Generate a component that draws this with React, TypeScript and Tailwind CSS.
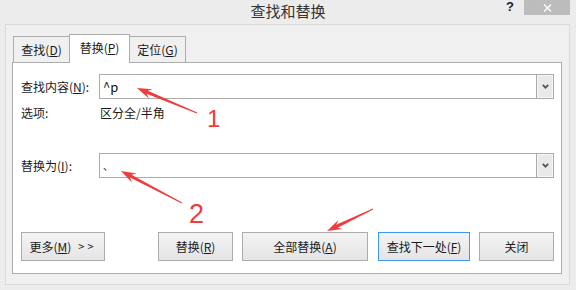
import React from 'react';

type Pt = [number, number];

// tapered red arrow from tail (s) to tip (t)
function arrowPoints(t: Pt, s: Pt) {
  const dx = t[0] - s[0];
  const dy = t[1] - s[1];
  const len = Math.hypot(dx, dy);
  const ux = dx / len;
  const uy = dy / len;
  const nx = -uy;
  const ny = ux;
  const head = 15;
  const hw = 5;
  const wing: Pt = [t[0] - ux * head, t[1] - uy * head];
  const neck: Pt = [t[0] - ux * (head - 4), t[1] - uy * (head - 4)];
  const pts: Pt[] = [
    [s[0] + nx * 0.4, s[1] + ny * 0.4],
    [neck[0] + nx * 1.6, neck[1] + ny * 1.6],
    [wing[0] + nx * hw, wing[1] + ny * hw],
    t,
    [wing[0] - nx * hw, wing[1] - ny * hw],
    [neck[0] - nx * 1.6, neck[1] - ny * 1.6],
    [s[0] - nx * 0.4, s[1] - ny * 0.4],
  ];
  return pts.map(p => `${p[0].toFixed(1)},${p[1].toFixed(1)}`).join(' ');
}

function Tab({ label, hot, active, first }: { label: string; hot: string; active?: boolean; first?: boolean }) {
  return (
    <div
      className={
        'flex items-center justify-center border-t border-l border-r border-[#acacac] ' +
        (first ? '' : '-ml-px ') +
        (active
          ? 'relative z-10 w-[61px] h-[29px] -mb-px bg-white pb-[2px]'
          : 'w-[57px] h-[26px] bg-[#f0f0f0]')
      }
    >
      {label}(<span className="underline">{hot}</span>)
    </div>
  );
}

function Combo({ value, small }: { value: string; small?: boolean }) {
  return (
    <div className="flex-1 h-[25px] flex border border-[#ababab] bg-white">
      <div className={'flex-1 pl-[3px] flex items-center text-[#111] ' + (small ? 'text-[10px]' : 'text-[13px]')}>{value}</div>
      <div className="w-[17px] flex items-center justify-center bg-[#e9e9e9] border-l border-[#a8a8a8] shadow-[inset_0_0_0_1px_#f6f6f6]">
        <svg width="7" height="5" viewBox="0 0 7 5">
          <polyline points="0.8,0.8 3.5,3.6 6.2,0.8" fill="none" stroke="#555" strokeWidth="1.8" />
        </svg>
      </div>
    </div>
  );
}

function Btn({ children, w, focus }: { children: React.ReactNode; w: string; focus?: boolean }) {
  return (
    <div
      className={
        'h-[29px] flex items-center justify-center bg-gradient-to-b from-[#f3f3f3] to-[#e5e5e5] border ' +
        (focus ? 'border-[#3c9af5] ' : 'border-[#acacac] ') +
        w
      }
    >
      {children}
    </div>
  );
}

export default function App() {
  return (
    <div className="relative w-[576px] h-[290px] overflow-hidden bg-[#ececec] text-[12px] text-[#1a1a1a] font-['Noto_Sans_CJK_SC',sans-serif]">
      {/* title bar */}
      <div className="h-[24px] flex">
        <div className="flex-1" />
        <div className="pt-[1px] text-[15px] leading-[20px] text-[#333]">查找和替换</div>
        <div className="flex-1 flex justify-end items-start">
          <span className="mr-[10px] text-[13px] font-bold leading-[13px] text-[#222] font-['Liberation_Sans',sans-serif]">?</span>
          <div className="mr-[6px] w-[46px] h-[15px] bg-[#bcbcbc] flex items-center justify-center">
            <svg width="9" height="8" viewBox="0 0 9 8">
              <path d="M1 0.5 L8 7.5 M8 0.5 L1 7.5" stroke="#fff" strokeWidth="1.3" />
            </svg>
          </div>
        </div>
      </div>

      {/* group box */}
      <div className="ml-[5px] w-[565px] h-[261px] border border-[#dadada] bg-[#f0f0f0] pl-[6px] pt-[9px]">
        <div className="h-[28px] flex items-end pl-px">
          <Tab label="查找" hot="D" first />
          <Tab label="替换" hot="P" active />
          <Tab label="定位" hot="G" />
        </div>

        <div className="w-[550px] h-[212px] border border-[#acacac] bg-white pl-[8px] pr-[7px] pt-[11px] flex flex-col">
          <div className="flex items-center">
            <div className="w-[78px]">
              查找内容(<span className="underline">N</span>):
            </div>
            <Combo value="^p" />
          </div>

          <div className="mt-[6px] h-[16px] leading-[16px] flex">
            <div className="w-[79px]">选项:</div>
            <div>区分全/半角</div>
          </div>

          <div className="mt-[32px] flex items-center">
            <div className="w-[78px]">
              替换为(<span className="underline">I</span>):
            </div>
            <Combo value="、" small />
          </div>

          <div className="mt-[54px] flex">
            <Btn w="w-[84px]">
              <span>更多(<span className="underline">M</span>)</span>
              <span className="ml-[7px] tracking-[3px] text-[11px]">&gt;&gt;</span>
            </Btn>
            <div className="w-[53px]" />
            <Btn w="w-[75px]">替换(<span className="underline">R</span>)</Btn>
            <div className="w-[9px]" />
            <Btn w="w-[126px]">全部替换(<span className="underline">A</span>)</Btn>
            <div className="w-[10px]" />
            <Btn w="w-[92px]" focus>查找下一处(<span className="underline">F</span>)</Btn>
            <div className="w-[9px]" />
            <Btn w="w-[75px]">关闭</Btn>
          </div>
        </div>
      </div>

      {/* red annotations */}
      <svg className="absolute inset-0 pointer-events-none" width="576" height="290" viewBox="0 0 576 290">
        <polygon points={arrowPoints([137, 88], [197, 113])} fill="#f03c3c" />
        <polygon points={arrowPoints([121, 171], [182, 203])} fill="#f03c3c" />
        <polygon points={arrowPoints([327, 231], [373, 209])} fill="#f03c3c" />
        <text x="207" y="127" fontSize="24" fill="#f03c3c" fontFamily="Liberation Sans, sans-serif">1</text>
        <text x="189" y="223" fontSize="27" fill="#f03c3c" fontFamily="Liberation Sans, sans-serif">2</text>
      </svg>
    </div>
  );
}
